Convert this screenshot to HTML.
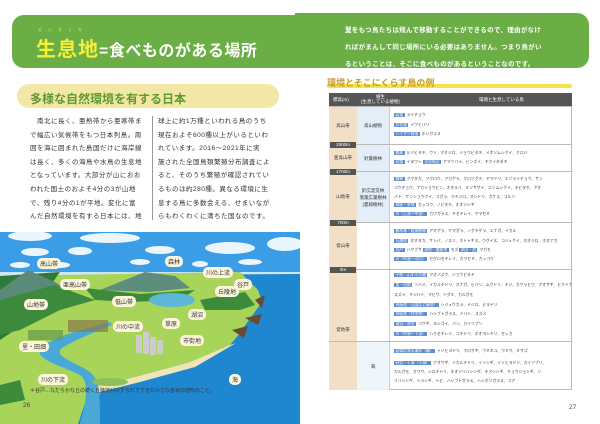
<!DOCTYPE html>
<html><head><meta charset="utf-8"><style>
*{margin:0;padding:0;box-sizing:border-box}
body{width:600px;height:424px;overflow:hidden;background:#fff;position:relative;font-family:"Liberation Sans","Noto Sans CJK JP",sans-serif;color:#333}
.abs{position:absolute}
.ban{background:#6aae45}
.body p{font-size:6.5px;line-height:13.6px;letter-spacing:0.5px;white-space:nowrap}
.row{position:absolute;left:329px;width:243px;border-bottom:1px solid #bbb;overflow:hidden}
.c1{position:absolute;left:0;top:0;bottom:0;width:28px;background:#f1dfc6;font-size:4.5px;display:flex;align-items:center;justify-content:center}
.c2{position:absolute;left:28px;top:0;bottom:0;width:33px;background:#e3eef8;border-right:1px solid #ccc;font-size:4.5px;display:flex;align-items:center;justify-content:center;text-align:center;line-height:7px}
.c3{position:absolute;left:65px;top:0;bottom:0;right:2px;font-size:3.8px;line-height:9.4px;white-space:nowrap;display:flex;flex-direction:column;justify-content:center}
.t{background:#5e8ed0;color:#fff;padding:0 1.5px;margin-right:2px}
.m{position:absolute;left:330px;background:#555;color:#fff;font-size:4.5px;width:26px;text-align:center;line-height:6px;z-index:2}
.lb{position:absolute;background:#fdf6dc;border-radius:5px;font-size:6px;padding:1px 3px;color:#333;white-space:nowrap}
</style></head><body>
<div class="abs ban" style="left:12px;top:15px;width:300px;height:53px;border-radius:12px 0 0 12px"></div>
<div class="abs ban" style="left:295px;top:13px;width:294px;height:55px;border-radius:0 12px 12px 0"></div>
<div class="abs" style="left:36px;top:33px;font-size:20px;font-weight:bold;color:#f5ee3a;letter-spacing:1px">生息地<span style="color:#fff;font-size:16px;letter-spacing:0.5px">=食べものがある場所</span></div>
<div class="abs" style="left:38px;top:27px;font-size:4px;color:#f5ee3a;letter-spacing:6px">せいそくち</div>
<div class="abs" style="left:345px;top:22px;font-size:6.5px;line-height:17px;color:#fff;font-weight:bold;white-space:nowrap;letter-spacing:0.3px">翼をもつ鳥たちは飛んで移動することができるので、理由がなけ<br>ればがまんして同じ場所にいる必要はありません。つまり鳥がい<br>るということは、そこに食べものがあるということなのです。</div>
<div class="abs" style="left:17px;top:84px;width:262px;height:24px;background:#f2e7a5;border-radius:12px"></div>
<div class="abs" style="left:30px;top:90px;font-size:12px;font-weight:bold;color:#5f9a2e">多様な自然環境を有する日本</div>
<div class="abs body" style="left:30px;top:115px"><p>　南北に長く、亜熱帯から亜寒帯ま<br>で幅広い気候帯をもつ日本列島。周<br>囲を海に囲まれた島国だけに海岸線<br>は長く、多くの海鳥や水鳥の生息地<br>となっています。大部分が山におお<br>われた国土のおよそ4分の3が山地<br>で、残り4分の1が平地。変化に富<br>んだ自然環境を有する日本には、地</p></div>
<div class="abs" style="left:152px;top:116px;width:1px;height:104px;background:#999"></div>
<div class="abs body" style="left:158px;top:115px"><p>球上に約1万種といわれる鳥のうち<br>現在およそ600種以上がいるといわ<br>れています。2016～2021年に実<br>施された全国鳥類繁殖分布調査によ<br>ると、そのうち繁殖が確認されてい<br>るものは約280種。異なる環境に生<br>息する鳥に多数会える、せまいなが<br>らもわくわくに満ちた国なのです。</p></div>
<svg class="abs" style="left:0;top:232px" width="300" height="192" viewBox="0 232 300 192">
<rect x="0" y="232" width="300" height="192" fill="#2f8fd8"/>
<rect x="0" y="232" width="300" height="45" fill="#3a9de6"/>
<g fill="#fff" opacity="0.9">
<ellipse cx="30" cy="236" rx="22" ry="5"/><ellipse cx="110" cy="238" rx="30" ry="5"/><ellipse cx="230" cy="248" rx="25" ry="6"/><ellipse cx="285" cy="244" rx="18" ry="7"/><ellipse cx="35" cy="252" rx="14" ry="4"/><ellipse cx="80" cy="251" rx="12" ry="4"/><ellipse cx="160" cy="250" rx="15" ry="4"/><ellipse cx="140" cy="262" rx="10" ry="3"/><ellipse cx="250" cy="262" rx="12" ry="3"/><ellipse cx="20" cy="265" rx="10" ry="3"/><ellipse cx="200" cy="264" rx="8" ry="3"/><ellipse cx="60" cy="265" rx="10" ry="3"/></g>
<rect x="0" y="272" width="300" height="4" fill="#cfe6f4"/>
<path d="M0 276 L300 274 L300 424 L0 424Z" fill="#1f86d0"/>
<path d="M0 276 L240 272 L258 290 L262 302 L236 338 L230 345 L190 362 L135 377 L90 388 L78 424 L0 424Z" fill="#a8d45a"/>
<path d="M230 345 L190 362 L135 377 L90 388 L80 424 L90 424 L100 392 L140 382 L195 367 L236 343Z" fill="#efe6b8"/>
<path d="M0 276 L60 272 L40 300 L15 330 L0 340Z" fill="#2f7a3a"/>
<path d="M0 290 L28 270 L55 282 L70 292 L0 300Z" fill="#5a8a78"/>
<path d="M100 290 L145 272 L175 276 L190 288 L150 292Z" fill="#5d8d7d"/>
<path d="M0 300 L55 285 L95 300 L60 310 L20 330 L0 335Z" fill="#3d8a3c"/>
<path d="M85 288 L140 294 L195 290 L180 300 L130 302 L95 300Z" fill="#3b8b3a"/>
<path d="M200 300 L245 292 L255 305 L240 310 L205 310Z" fill="#3b8b3a"/>
<ellipse cx="172" cy="300" rx="23" ry="7" fill="#5db8d8"/>
<path d="M0 385 L20 380 L25 400 L0 405Z" fill="#3b8b3a"/>
<path d="M110 322 C80 330 55 336 40 348 C35 360 60 365 80 375 C88 380 88 395 80 424 L100 424 C100 395 100 380 90 372 C75 362 52 356 62 348 C75 340 95 332 112 325Z" fill="#4aa8d6"/>
<rect x="68" y="320" width="40" height="12" fill="#8a7a4a" opacity="0.7"/>
<rect x="28" y="330" width="35" height="10" fill="#6a9a4a" opacity="0.7"/>
<g fill="#ccc"><rect x="136" y="335" width="6" height="18"/><rect x="143" y="332" width="6" height="22"/><rect x="150" y="337" width="6" height="18"/><rect x="157" y="340" width="6" height="14"/></g>
<ellipse cx="110" cy="382" rx="18" ry="4" fill="#8fbf5a"/>
<path d="M255 300 L265 295 L262 308Z M245 318 L262 314 L258 325Z M232 330 L248 326 L244 338Z" fill="#6b4a35"/>
</svg>
<div class="lb" style="left:37px;top:258px">高山帯</div>
<div class="lb" style="left:60px;top:279px">亜高山帯</div>
<div class="lb" style="left:24px;top:299px">山地帯</div>
<div class="lb" style="left:165px;top:256px">森林</div>
<div class="lb" style="left:203px;top:267px">川の上流</div>
<div class="lb" style="left:234px;top:279px">谷戸</div>
<div class="lb" style="left:215px;top:286px">丘陵地</div>
<div class="lb" style="left:112px;top:296px">低山帯</div>
<div class="lb" style="left:188px;top:309px">湖沼</div>
<div class="lb" style="left:162px;top:318px">草原</div>
<div class="lb" style="left:113px;top:321px">川の中流</div>
<div class="lb" style="left:180px;top:335px">市街地</div>
<div class="lb" style="left:19px;top:341px">里・田畑</div>
<div class="lb" style="left:38px;top:374px">川の下流</div>
<div class="lb" style="left:229px;top:374px">海</div>
<div class="abs" style="left:30px;top:387px;font-size:5px;color:#333">＊谷戸…なだらかな丘の続く丘陵地がけずられてできた小さな谷状の地形のこと。</div>
<div class="abs" style="left:23px;top:402px;font-size:6.5px;color:#444">26</div>
<div class="abs" style="left:327px;top:84px;width:245px;height:4px;background:#f3e34a;border-radius:2px"></div>
<div class="abs" style="left:327px;top:76px;font-size:9px;font-weight:bold;color:#c49a2a">環境とそこにくらす鳥の例</div>
<div class="abs" style="left:329px;top:93px;width:243px;height:297px;border:1px solid #bbb"></div>
<div class="row" style="top:93px;height:14px;background:#555;color:#fff;font-size:4.5px"><div style="position:absolute;left:4px;top:4px">標高(m)</div><div style="position:absolute;left:32px;top:1px;text-align:center;line-height:5px">植生<br>(生息している植物)</div><div style="position:absolute;left:150px;top:4px">環境と生息している鳥</div></div>
<div class="row" style="top:107px;height:38px"><div class="c1">高山帯</div><div class="c2">高山植物</div><div class="c3"><div><span class="t">岩場</span>ライチョウ</div><div><span class="t">お花畑</span>イワヒバリ</div><div><span class="t">ハイマツ群落</span>ホシガラス</div></div></div>
<div class="row" style="top:145px;height:27px"><div class="c1">亜高山帯</div><div class="c2">針葉樹林</div><div class="c3"><div><span class="t">森林</span>ルリビタキ、ウソ、マミジロ、ジョウビタキ、メボソムシクイ、クロジ</div><div><span class="t">岩場</span>イヌワシ <span class="t">渓谷周辺</span>アマツバメ、ビンズイ、キクイタダキ</div></div></div>
<div class="row" style="top:172px;height:51px"><div class="c1">山地帯</div><div class="c2">針広混交林<br>落葉広葉樹林<br>(夏緑樹林)</div><div class="c3" style="line-height:8.8px"><div><span class="t">森林</span>クマタカ、フクロウ、アカゲラ、クロツグミ、ヤマドリ、エゾライチョウ、サン</div><div>コウチョウ、アカショウビン、オオルリ、ミソサザイ、エゾムシクイ、キビタキ、アオ</div><div>バト、サンショウクイ、コガラ、マミジロ、オシドリ、カケス、コルリ</div><div><span class="t">草原・草地</span>カッコウ、ノビタキ、オオジシギ</div><div><span class="t">川（上流～中流）</span>カワガラス、キセキレイ、ヤマセミ</div></div></div>
<div class="row" style="top:223px;height:47px"><div class="c1">低山帯</div><div class="c2" style="background:#fff"></div><div class="c3"><div><span class="t">雑木林・照葉樹林</span>アオゲラ、ヤマガラ、ノグチゲラ、エナガ、イカル</div><div><span class="t">丘陵地</span>オオタカ、サシバ、ノスリ、ホトトギス、ウグイス、コジュケイ、ホオジロ、ホオアカ</div><div><span class="t">谷戸</span>ハヤブサ <span class="t">耕地・農耕地</span>モズ <span class="t">湖沼・池</span>マガモ</div><div><span class="t">川（中流～河口）</span>セグロセキレイ、カワセミ、カッコウ</div></div></div>
<div class="row" style="top:270px;height:72px"><div class="c1" style="bottom:-48px">低地帯</div><div class="c2" style="background:#fff"></div><div class="c3" style="line-height:9.8px"><div><span class="t">平地・山すその森</span>アオバズク、ジョウビタキ</div><div><span class="t">里・田畑</span>ツバメ、イカルチドリ、オナガ、ヒバリ、ムクドリ、キジ、カワラヒワ、アオサギ、ヒクイナ、</div><div>スズメ、キジバト、マヒワ、ツグミ、カルガモ</div><div><span class="t">市街地（公園など緑地）</span>シジュウカラ、メジロ、ヒヨドリ</div><div><span class="t">市街地（住宅地）</span>ハシブトガラス、ドバト、スズメ</div><div><span class="t">湖沼・池沼</span>コサギ、ヨシゴイ、バン、カイツブリ</div><div><span class="t">川（中流～下流）</span>ハクセキレイ、コチドリ、オオヨシキリ、セッカ</div></div></div>
<div class="row" style="top:342px;height:48px;border-bottom:none"><div class="c1" style="top:-72px">低地帯</div><div class="c2" style="background:#eef5fb">海</div><div class="c3" style="line-height:8.6px"><div><span class="t">岩場のある海岸（磯）</span>イソヒヨドリ、クロサギ、ウミネコ、ウミウ、ミサゴ</div><div style="margin-top:4px"><span class="t">砂浜・干潟（干潟）</span>アオサギ、イカルチドリ、イソシギ、イソヒヨドリ、カイツブリ、</div><div>カルガモ、カワウ、シロチドリ、オオソリハシシギ、キアシシギ、キョウジョシギ、ソ</div><div>リハシシギ、ヘラシギ、トビ、ハシブトガラス、ハシボソガラス、コア</div></div></div>
<div class="m" style="top:142px">2500m</div>
<div class="m" style="top:169px">1700m</div>
<div class="m" style="top:220px">700m</div>
<div class="m" style="top:267px">0m</div>
<div class="abs" style="left:569px;top:404px;font-size:6.5px;color:#444">27</div>
</body></html>
